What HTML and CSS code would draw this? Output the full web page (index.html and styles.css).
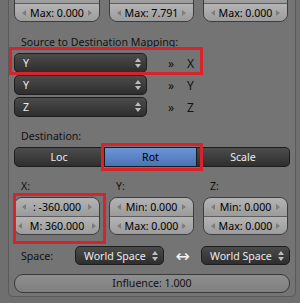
FILE: index.html
```html
<!DOCTYPE html>
<html lang="en">
<head>
    <link rel="stylesheet" href="styles.css">
    <meta charset="UTF-8">
    <title>Copy Transforms</title>
</head>
<body>
  <div class="panel">

    <!-- upper limits, min row scrolled out of view -->
    <div class="cols fields">
      <div class="numfield">
        <div class="nrow"></div>
        <div class="nrow"><span class="la"></span><span class="val">Max: 0.000</span><span class="ra"></span></div>
      </div>
      <div class="numfield">
        <div class="nrow"></div>
        <div class="nrow"><span class="la"></span><span class="val">Max: 7.791</span><span class="ra"></span></div>
      </div>
      <div class="numfield">
        <div class="nrow"></div>
        <div class="nrow"><span class="la"></span><span class="val">Max: 0.000</span><span class="ra"></span></div>
      </div>
    </div>

    <div class="label label-map">Source to Destination Mapping:</div>

    <div class="maprow">
      <div class="menu"><span class="menu-text">Y</span><span class="updown"></span></div>
      <span class="raquo">&raquo;</span><span class="axis">X</span>
    </div>
    <div class="maprow">
      <div class="menu"><span class="menu-text">Y</span><span class="updown"></span></div>
      <span class="raquo">&raquo;</span><span class="axis">Y</span>
    </div>
    <div class="maprow">
      <div class="menu"><span class="menu-text">Z</span><span class="updown"></span></div>
      <span class="raquo">&raquo;</span><span class="axis">Z</span>
    </div>

    <div class="label label-dest">Destination:</div>

    <div class="radio">
      <div class="rbtn rbtn-loc">Loc</div>
      <div class="rbtn rbtn-rot sel">Rot</div>
      <div class="rbtn rbtn-scale">Scale</div>
    </div>

    <div class="cols axislabels">
      <div class="label">X:</div>
      <div class="label">Y:</div>
      <div class="label">Z:</div>
    </div>

    <div class="cols fields fields-xyz">
      <div class="numfield">
        <div class="nrow"><span class="la"></span><span class="val">: -360.000</span><span class="ra"></span></div>
        <div class="nrow tight"><span class="la"></span><span class="val">M: 360.000</span><span class="ra"></span></div>
      </div>
      <div class="numfield">
        <div class="nrow"><span class="la"></span><span class="val">Min: 0.000</span><span class="ra"></span></div>
        <div class="nrow"><span class="la"></span><span class="val">Max: 0.000</span><span class="ra"></span></div>
      </div>
      <div class="numfield">
        <div class="nrow"><span class="la"></span><span class="val">Min: 0.000</span><span class="ra"></span></div>
        <div class="nrow"><span class="la"></span><span class="val">Max: 0.000</span><span class="ra"></span></div>
      </div>
    </div>

    <div class="spacerow">
      <div class="label space-label">Space:</div>
      <div class="menu menu-space"><span class="menu-text">World Space</span><span class="updown"></span></div>
      <div class="swap">&harr;</div>
      <div class="menu menu-space"><span class="menu-text">World Space</span><span class="updown"></span></div>
    </div>

    <div class="slider">Influence: 1.000</div>

    <!-- red annotation boxes -->
    <div class="mark mark-map"></div>
    <div class="mark mark-rot"></div>
    <div class="mark mark-x"></div>
  </div>
</body>
</html>
```

FILE: styles.css
```css
body {
  margin: 0;
  background: #6f6f6f;
  font-family: "Noto Sans", "DejaVu Sans", sans-serif;
  font-size: 10.6px;
  color: #000;
  overflow: hidden;
}

.panel {
  position: relative;
  margin: -17px 0 0 8px;
  width: 276px;
  padding: 0 5px 3px 5px;
  background: #747474;
  border: 1px solid #5a5a5a;
  border-radius: 0 0 5px 5px;
}

.cols {
  display: grid;
  grid-template-columns: 86px 85px 85px;
  column-gap: 9px;
}

.label {
  height: 20px;
  line-height: 20px;
  padding-left: 7px;
  color: #111;
}

/* number fields (min / max pairs) */
.numfield {
  height: 38px;
  border: 1px solid #3c3c3c;
  border-radius: 8px;
  box-sizing: border-box;
  overflow: hidden;
}

.nrow {
  height: 18px;
  display: flex;
  align-items: center;
  padding: 0 7px;
  background: linear-gradient(#b4b4b4, #9b9b9b);
}

.nrow + .nrow {
  border-top: 1px solid #5e5e5e;
}

.nrow.tight {
  padding: 0 3px;
}

.val {
  flex: 1;
  text-align: center;
  white-space: nowrap;
}

.la, .ra {
  width: 0;
  height: 0;
  border-top: 3px solid transparent;
  border-bottom: 3px solid transparent;
}

.la { border-right: 4px solid #7c7c7c; }
.ra { border-left: 4px solid #7c7c7c; }

.label-map {
  margin-top: 10px;
}

/* dropdown menus */
.maprow {
  display: flex;
  align-items: center;
  height: 20px;
  margin-top: 2px;
}

.label-map + .maprow {
  margin-top: 1px;
}

.menu {
  width: 133px;
  height: 20px;
  box-sizing: border-box;
  display: flex;
  align-items: center;
  padding: 0 5px 0 8px;
  border: 1px solid #1e1e1e;
  border-radius: 5px;
  background: linear-gradient(#4b4b4b, #2e2e2e);
  color: #ececec;
}

.menu-text {
  flex: 1;
  white-space: nowrap;
}

.updown {
  position: relative;
  width: 6px;
  height: 12px;
}

.updown::before, .updown::after {
  content: "";
  position: absolute;
  left: 0;
  border-left: 3px solid transparent;
  border-right: 3px solid transparent;
}

.updown::before {
  top: 1px;
  border-bottom: 4px solid #bdbdbd;
}

.updown::after {
  bottom: 1px;
  border-top: 4px solid #bdbdbd;
}

.raquo {
  margin-left: 21px;
  color: #111;
  font-size: 12px;
}

.axis {
  margin-left: 13px;
  color: #111;
  font-size: 12px;
}

.label-dest {
  margin-top: 9px;
}

/* Loc / Rot / Scale */
.radio {
  display: flex;
  height: 20px;
  margin-top: 1px;
}

.rbtn {
  height: 20px;
  box-sizing: border-box;
  line-height: 18px;
  text-align: center;
  border: 1px solid #1e1e1e;
  background: linear-gradient(#4c4c4c, #2f2f2f);
  color: #ececec;
}

.rbtn-loc {
  width: 90px;
  border-radius: 5px 0 0 5px;
}

.rbtn-rot {
  width: 93px;
  border-left: none;
}

.rbtn-scale {
  width: 93px;
  border-left: none;
  border-radius: 0 5px 5px 0;
}

.rbtn.sel {
  background: linear-gradient(#6d95d6, #4a72b6);
  color: #000;
  border: 1px solid #1a1a1a;
}

.axislabels {
  margin-top: 9px;
}

.fields-xyz {
  margin-top: 1px;
}

/* space row */
.spacerow {
  display: flex;
  align-items: center;
  height: 19px;
  margin-top: 11px;
}

.space-label {
  width: 54px;
}

.menu-space {
  width: 89px;
  height: 19px;
}

.swap {
  width: 37px;
  text-align: center;
  color: #f4f4f4;
  font-size: 17px;
  line-height: 19px;
}

/* influence slider */
.slider {
  margin-top: 9px;
  height: 19px;
  box-sizing: border-box;
  line-height: 17px;
  text-align: center;
  border: 1px solid #3a3a3a;
  border-radius: 9px;
  background: linear-gradient(#8e8e8e, #7f7f7f);
  color: #111;
}

/* red annotation boxes */
.mark {
  position: absolute;
  border: 3px solid #d8232d;
  box-sizing: border-box;
}

.mark-map {
  left: 0;
  top: 63px;
  width: 194px;
  height: 28px;
}

.mark-rot {
  left: 92px;
  top: 159px;
  width: 102px;
  height: 28px;
}

.mark-x {
  left: 4px;
  top: 209px;
  width: 93px;
  height: 51px;
}
```
